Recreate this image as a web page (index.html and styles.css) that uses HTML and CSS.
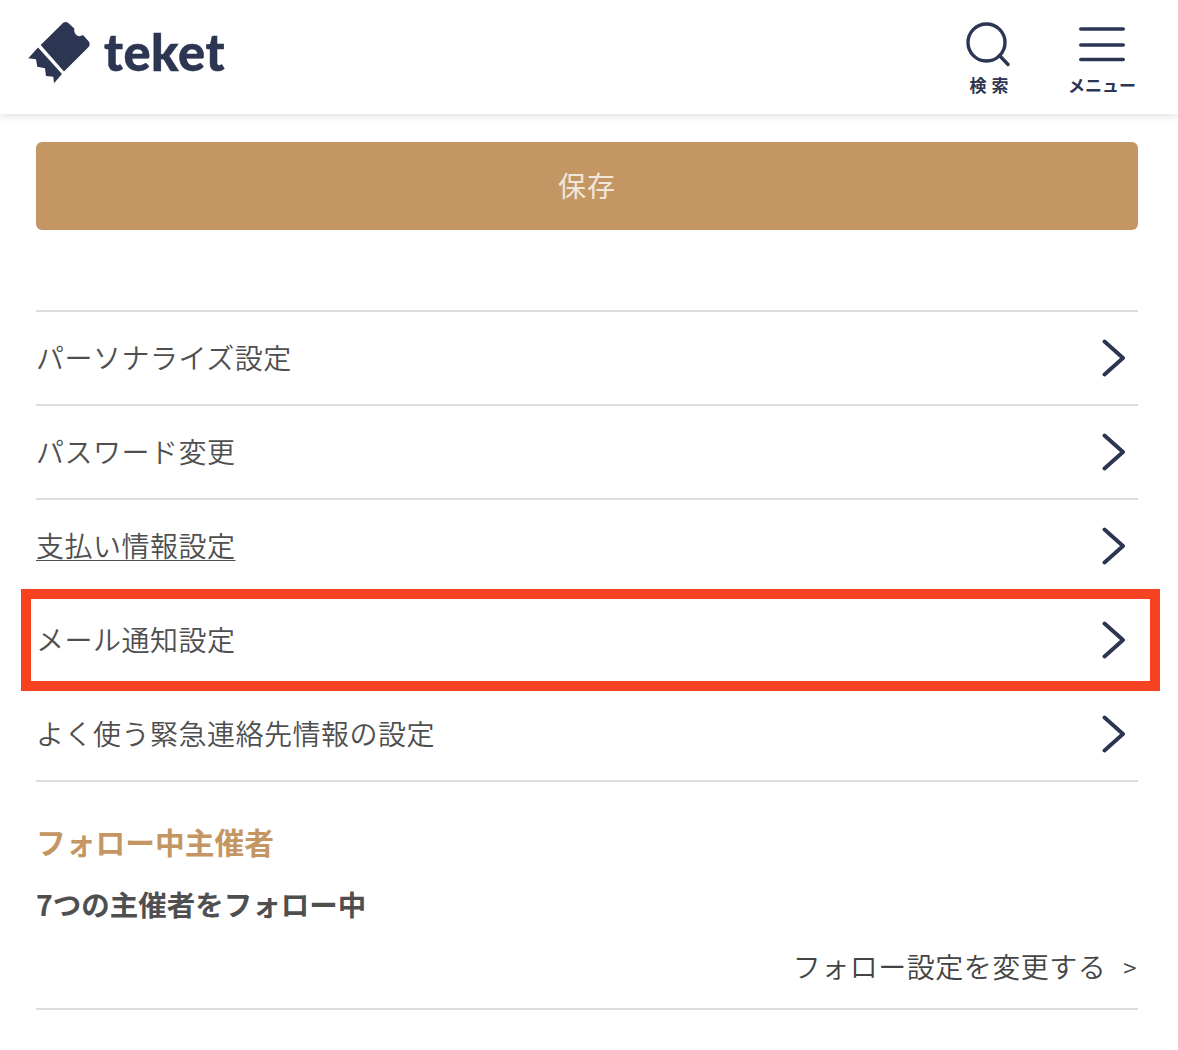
FILE: index.html
```html
<!DOCTYPE html>
<html lang="ja">
<head>
<meta charset="utf-8">
<title>teket</title>
<link rel="stylesheet" href="styles.css">
</head>
<body>
<header class="site-header">
  <a class="brand">
    <svg class="brand-mark" viewBox="0 0 64 64" width="64" height="64">
      <path d="M13.700 24 L36.500 1.500 Q38.800 .2 41 1.800 L47.300 7.500 Q46.800 12.500 50 14.500 Q53 16 56 14 L61.800 20.500 Q63.600 23.500 61.600 26 L37 50.500 Z" fill="#2c3552"/>
      <path d="M11 26.500 L35 53 L27 62.300 L26.300 55.700 L19 55 L18 47.300 L10.300 45.700 L9 38.300 L1.300 37.300 Z" fill="#2c3552"/>
    </svg>
    <span class="brand-name">teket</span>
  </a>
  <nav class="header-nav">
    <a class="nav-item nav-search">
      <svg viewBox="0 0 46 46" width="46" height="46" fill="none" stroke="#2c3552" stroke-width="3.400" stroke-linecap="round"><circle cx="20.500" cy="21.500" r="18.500"/><path d="M33.500 34.500 L42 43.500"/></svg>
      <span>検 索</span>
    </a>
    <a class="nav-item nav-menu">
      <svg viewBox="0 0 46 46" width="46" height="46" fill="none" stroke="#2c3552" stroke-width="3.600" stroke-linecap="round"><path d="M1.800 8H44.200M1.800 24H44.200M1.800 38.500H44.200"/></svg>
      <span>メニュー</span>
    </a>
  </nav>
</header>
<main class="content">
  <button class="save-button">保存</button>
  <ul class="settings-list">
    <li class="settings-row"><span>パーソナライズ設定</span><svg class="chevron" viewBox="0 0 24 38" width="24" height="38"><path d="M2.500 2.500 L21 19 L2.500 35.500"/></svg></li>
    <li class="settings-row"><span>パスワード変更</span><svg class="chevron" viewBox="0 0 24 38" width="24" height="38"><path d="M2.500 2.500 L21 19 L2.500 35.500"/></svg></li>
    <li class="settings-row"><span class="underlined">支払い情報設定</span><svg class="chevron" viewBox="0 0 24 38" width="24" height="38"><path d="M2.500 2.500 L21 19 L2.500 35.500"/></svg></li>
    <li class="settings-row highlighted"><span>メール通知設定</span><svg class="chevron" viewBox="0 0 24 38" width="24" height="38"><path d="M2.500 2.500 L21 19 L2.500 35.500"/></svg></li>
    <li class="settings-row"><span>よく使う緊急連絡先情報の設定</span><svg class="chevron" viewBox="0 0 24 38" width="24" height="38"><path d="M2.500 2.500 L21 19 L2.500 35.500"/></svg></li>
  </ul>
  <section class="follow">
    <h2 class="follow-title">フォロー中主催者</h2>
    <p class="follow-count">7つの主催者をフォロー中</p>
    <a class="follow-link"><span>フォロー設定を変更する</span><span class="follow-arrow">&gt;</span></a>
  </section>
</main>
</body>
</html>
```
FILE: styles.css
```css
*, *::before, *::after { box-sizing: border-box; }
html, body { margin: 0; padding: 0; background: #fff; }
body {
  width: 1178px;
  height: 1050px;
  overflow: hidden;
  font-family: "Noto Sans CJK JP", "Noto Sans", sans-serif;
  color: #4f4f4f;
}
.site-header {
  height: 114px;
  display: flex;
  align-items: flex-start;
  justify-content: space-between;
  background: #fff;
  box-shadow: 0 2px 8px rgba(0, 0, 0, 0.12);
  position: relative;
}
.brand { display: flex; align-items: center; margin: 21px 0 0 27px; }
.brand-mark { display: block; }
.brand-name {
  font-family: Lato, sans-serif;
  font-weight: 900;
  font-size: 50.500px;
  line-height: 64px;
  color: #2c3552;
  margin-left: 13px;
  margin-top: -2px;
  letter-spacing: 0.6px;
  -webkit-text-stroke: 0.5px #2c3552;
}
.header-nav { display: flex; }
.nav-item {
  display: flex;
  flex-direction: column;
  align-items: center;
  color: #2c3552;
  font-size: 17px;
  font-weight: 700;
  line-height: 20px;
  margin-top: 21px;
}
.nav-item svg { display: block; margin-bottom: 8px; flex: none; }
.nav-search { width: 46px; margin-right: 56px; }
.nav-search span { white-space: nowrap; word-spacing: 1px; }
.nav-menu { width: 68px; margin-right: 42px; }
.nav-menu span { white-space: nowrap; }
.content { padding: 28px 40px 0 36px; }
.save-button {
  display: block;
  width: 100%;
  height: 88px;
  border: 0;
  border-radius: 6px;
  background: #c49664;
  color: #f0e6da;
  font-family: inherit;
  font-size: 28px;
  font-weight: 400;
  letter-spacing: 1px;
  padding: 0 0 2px;
}
.settings-list {
  list-style: none;
  margin: 80px 0 0;
  padding: 0;
  border-top: 2px solid #ddd;
}
.settings-row {
  height: 94px;
  display: flex;
  align-items: center;
  justify-content: space-between;
  padding: 0 12px 0 0;
  border-bottom: 2px solid #ddd;
  font-size: 28px;
  font-weight: 350;
  letter-spacing: 0.5px;
  position: relative;
}
.settings-row span { position: relative; top: -1px; }
.underlined { text-decoration: underline; text-underline-offset: 3px; text-decoration-thickness: 1px; }
.chevron { display: block; fill: none; stroke: #2c3552; stroke-width: 3.900; stroke-linecap: round; stroke-linejoin: round; }
.highlighted { border-bottom-color: transparent; }
.highlighted::after {
  content: "";
  position: absolute;
  left: -15px;
  right: -22px;
  top: -5px;
  height: 102px;
  border: 10px solid #f54322;
}
.follow-title {
  margin: 37px 0 0;
  font-size: 29.750px;
  line-height: 44px;
  font-weight: 700;
  color: #c49664;
}
.follow-count {
  margin: 19px 0 0;
  font-size: 28.500px;
  line-height: 44px;
  font-weight: 700;
}
.follow-link {
  display: flex;
  justify-content: flex-end;
  align-items: center;
  height: 76px;
  margin-top: 8px;
  padding-bottom: 10px;
  border-bottom: 2px solid #ddd;
  font-size: 28px;
  font-weight: 350;
  letter-spacing: 0.5px;
  color: #444;
}
.follow-arrow { margin-left: 17px; font-size: 24px; margin-right: 1px; }
```
